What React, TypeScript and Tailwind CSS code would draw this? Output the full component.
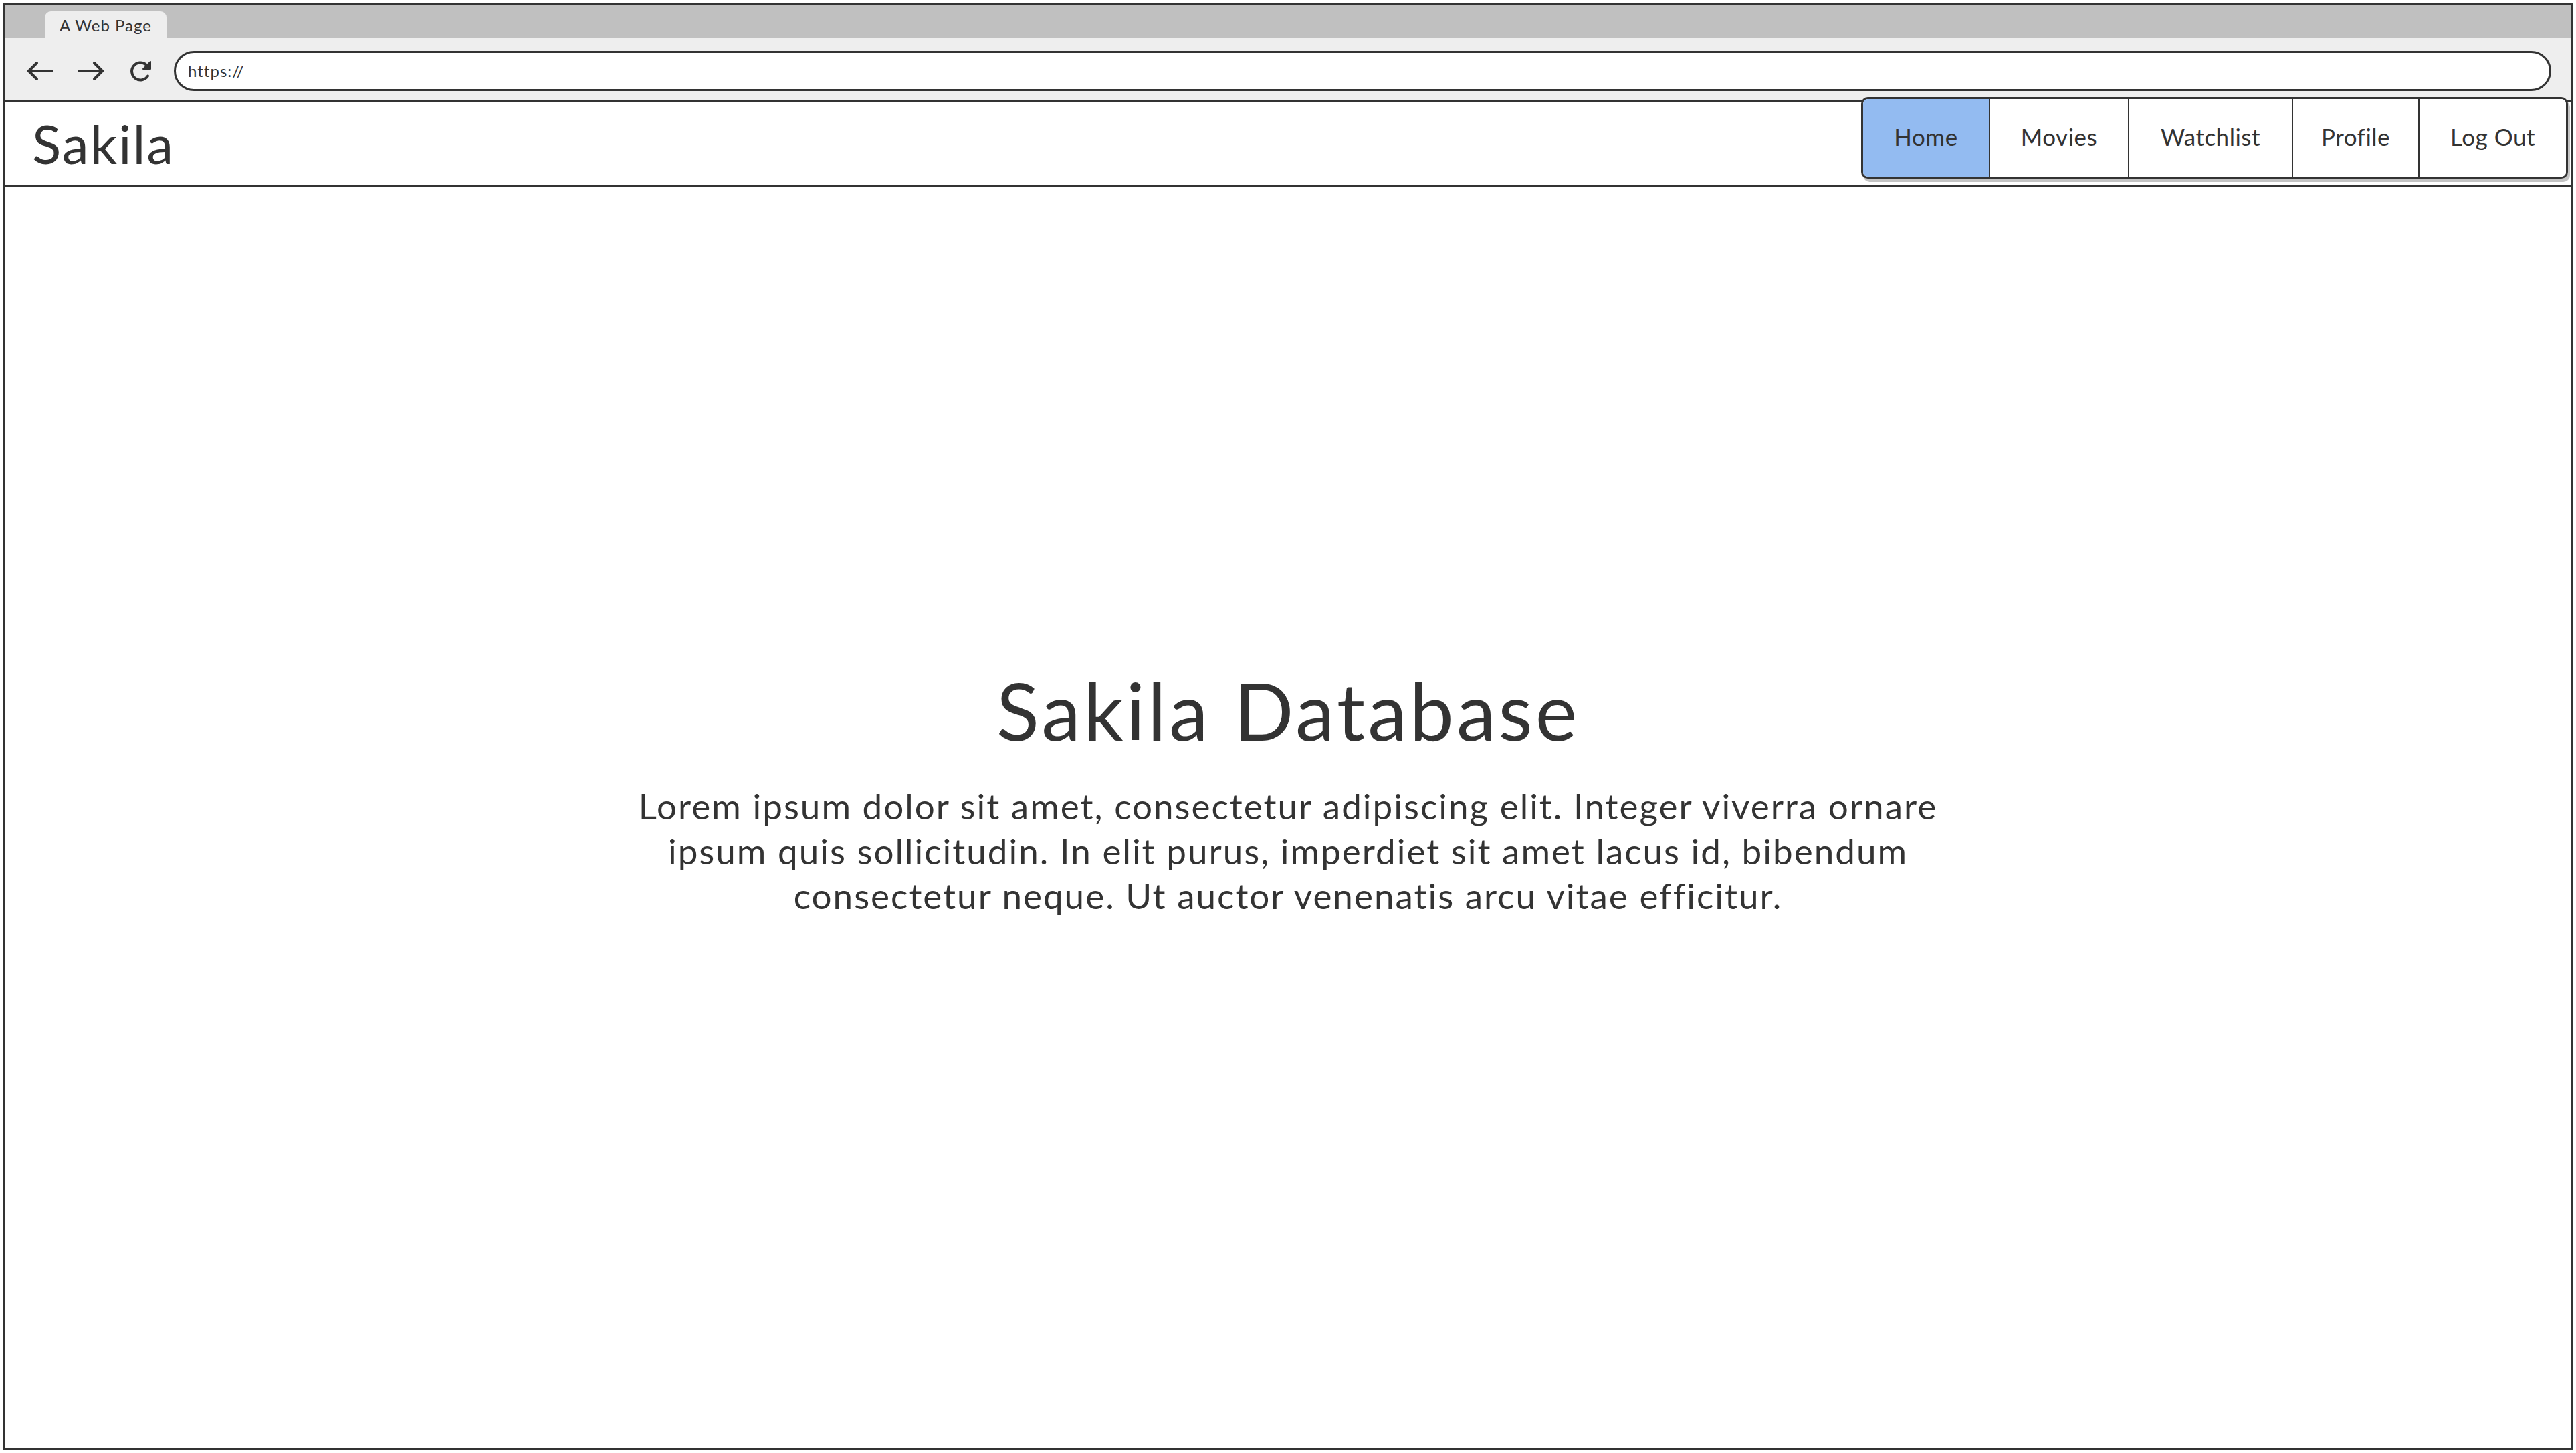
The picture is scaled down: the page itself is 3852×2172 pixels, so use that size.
import React from "react";

const font = "font-['Lato','Noto_Sans',sans-serif]";

function BackIcon() {
  return (
    <svg viewBox="0 0 42 30" fill="none" stroke="currentColor" strokeWidth="4" strokeLinecap="round" strokeLinejoin="round" className="w-[42px] h-[30px]">
      <path d="M39 15H4" />
      <path d="M16 3L4 15l12 12" />
    </svg>
  );
}

function ForwardIcon() {
  return (
    <svg viewBox="0 0 42 30" fill="none" stroke="currentColor" strokeWidth="4" strokeLinecap="round" strokeLinejoin="round" className="w-[42px] h-[30px]">
      <path d="M3 15h35" />
      <path d="M26 3l12 12-12 12" />
    </svg>
  );
}

function ReloadIcon() {
  return (
    <svg viewBox="0 0 38 36" fill="none" stroke="currentColor" strokeWidth="4" strokeLinecap="round" strokeLinejoin="round" className="w-[38px] h-[36px]">
      <path d="M30 25.5A13 13 0 1 1 27.5 8.5" />
      <path d="M34 4v11H23z" fill="currentColor" strokeWidth="2" />
    </svg>
  );
}

const navItems = [
  { label: "Home", w: "w-[188px]", active: true },
  { label: "Movies", w: "w-[208px]", active: false },
  { label: "Watchlist", w: "w-[245px]", active: false },
  { label: "Profile", w: "w-[189px]", active: false },
  { label: "Log Out", w: "w-[221px]", active: false },
];

export default function App() {
  return (
    <div className={`w-[3852px] h-[2172px] p-[5px] bg-white text-[#333] ${font}`}>
      <div className="h-full flex flex-col border-[3px] border-[#333]">
        {/* tab strip */}
        <div className="h-[49px] bg-[#c0c0c0] flex items-end pl-[59px]">
          <div className="w-[182px] h-[40px] bg-[#eeeeee] rounded-t-[9px] flex items-center justify-center text-[24px] tracking-[1px] pt-[2px]">
            A Web Page
          </div>
        </div>

        {/* toolbar */}
        <div className="h-[95px] bg-[#eeeeee] border-b-[3px] border-[#333] flex items-center pl-[31px] pr-[29px] pt-[5px]">
          <div className="flex items-center gap-[34px]">
            <BackIcon />
            <ForwardIcon />
            <ReloadIcon />
          </div>
          <div className="ml-[31px] flex-1 h-[60px] bg-white border-[3px] border-[#333] rounded-full flex items-center pl-[18px] text-[24px] tracking-[1px]">
            https://
          </div>
        </div>

        {/* page header */}
        <div className="h-[128px] border-b-[3px] border-[#333] flex items-start justify-between pl-[40px] pr-[4px]">
          <div className="text-[80px] leading-none tracking-[2px] mt-[22px]">Sakila</div>
          <nav className="-mt-[7px] h-[122px] flex border-[3px] border-[#333] rounded-[10px] overflow-hidden bg-white shadow-[3px_5px_0_0_#c4c4c4]">
            {navItems.map((item, i) => (
              <div
                key={item.label}
                className={`${item.w} flex items-center justify-center text-[35px] tracking-[0.5px] pb-[4px] ${i > 0 ? "border-l-2 border-[#333]" : ""} ${item.active ? "bg-[#93bbf1]" : "bg-white"}`}
              >
                {item.label}
              </div>
            ))}
          </nav>
        </div>

        {/* hero */}
        <main className="flex-1 flex flex-col items-center justify-center pb-[70px]">
          <h1 className="text-[118px] leading-none tracking-[4px]">Sakila Database</h1>
          <p className="mt-[50px] text-[53px] leading-[67px] tracking-[2px] text-center">
            Lorem ipsum dolor sit amet, consectetur adipiscing elit. Integer viverra ornare
            <br />
            ipsum quis sollicitudin. In elit purus, imperdiet sit amet lacus id, bibendum
            <br />
            consectetur neque. Ut auctor venenatis arcu vitae efficitur.
          </p>
        </main>
      </div>
    </div>
  );
}
